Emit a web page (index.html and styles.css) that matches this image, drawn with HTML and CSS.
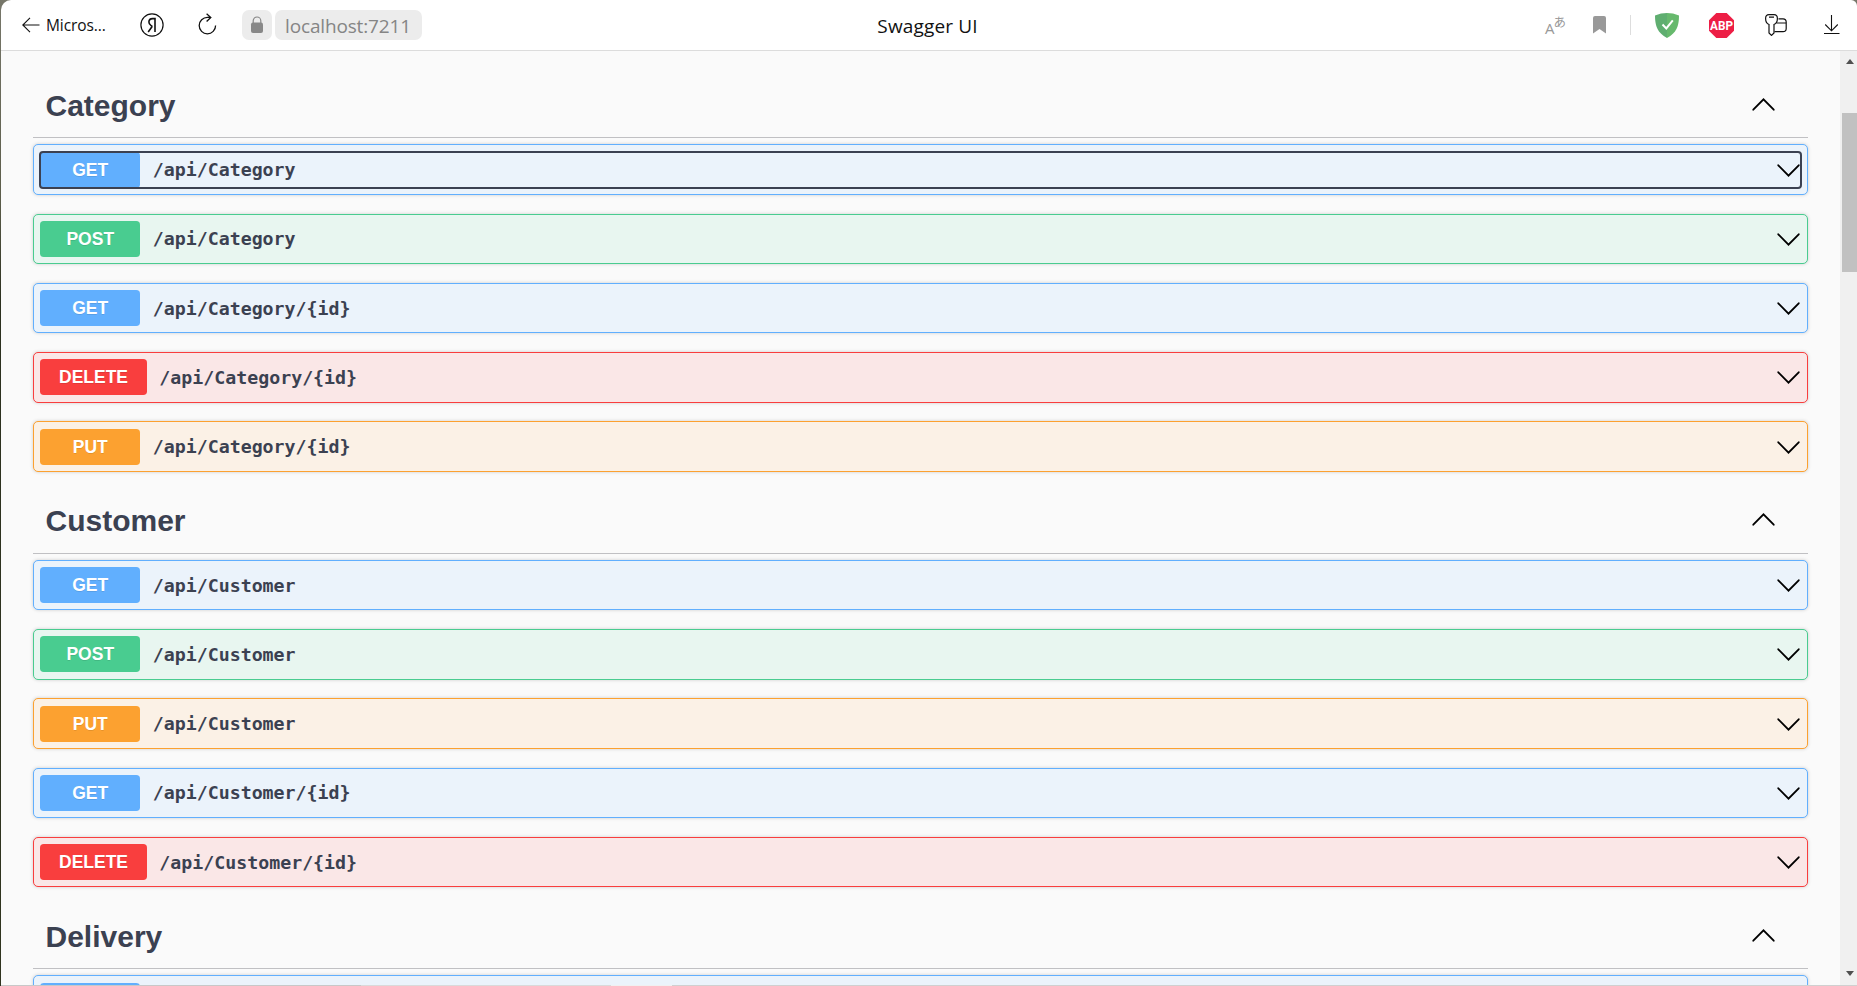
FILE: index.html
```html
<!DOCTYPE html>
<html lang="en">
<head>
<meta charset="utf-8">
<title>Swagger UI</title>
<link rel="stylesheet" href="styles.css">
</head>
<body>
<svg class="defs" aria-hidden="true">
  <symbol id="chev-down" viewBox="0 0 24 24"><path d="M2.200 7 12 17 21.800 7" fill="none" stroke="#000" stroke-width="1.8" stroke-linecap="round"/></symbol>
  <symbol id="chev-up" viewBox="0 0 24 24"><path d="M2.200 17 12 7 21.800 17" fill="none" stroke="#000" stroke-width="1.8" stroke-linecap="round"/></symbol>
</svg>
<div class="window">
  <header class="toolbar">
    <div class="nav">
      <svg class="back" width="18" height="16" viewBox="0 0 18 16"><path d="M8 .8.8 8 8 15.2M.8 8H17.5" fill="none" stroke="#111" stroke-width="1.1"/></svg>
      <span class="back-label">Micros...</span>
      <svg class="yandex" width="24" height="24" viewBox="0 0 24 24"><circle cx="12" cy="12" r="11.1" fill="none" stroke="#111" stroke-width="1.2"/><path d="M15 19V5.6h-2.3c-2.5 0-3.800 1.400-3.800 3.500 0 1.700.8 2.700 2.200 3.500l1.200.8M12.300 13.200 8.200 19" fill="none" stroke="#111" stroke-width="1.6"/></svg>
      <svg class="reload" width="20" height="22" viewBox="0 0 20 22"><path d="M13.6 4.400H10.500a8.200 8.200 0 1 0 8.100 8.200M9.600.8l4.200 3.700-4.200 4" fill="none" stroke="#111" stroke-width="1.3"/></svg>
      <span class="lock"><svg width="14" height="18" viewBox="0 0 14 18"><path d="M3.200 8V4.800a3.800 3.800 0 0 1 7.600 0V8" fill="none" stroke="#888" stroke-width="1.2"/><rect x="1" y="6.500" width="12" height="10.500" rx="2" fill="#888"/></svg></span>
      <span class="host">localhost:7211</span>
    </div>
    <div class="page-title">Swagger UI</div>
    <div class="tools">
      <div class="translate"><span class="latin">A</span><span class="kana">あ</span></div>
      <svg class="bookmark" width="13" height="18" viewBox="0 0 13 18"><path d="M0 2a2 2 0 0 1 2-2h9a2 2 0 0 1 2 2v15.500L6.500 13 0 17.500z" fill="#999"/></svg>
      <span class="divider"></span>
      <svg class="shield" width="24" height="25" viewBox="0 0 24 25"><path d="M12 0c4 0 8 .8 12 2.500C24 13 21.500 20 12 25z" fill="#67b96d"/><path d="M12 0C8 0 4 .8 0 2.500 0 13 2.500 20 12 25z" fill="#5fae70"/><path d="m7.500 11.500 3.800 3.900 6.500-8" fill="none" stroke="#fff" stroke-width="2"/></svg>
      <svg class="abp" width="25" height="25" viewBox="0 0 25 25"><path d="M7.300 0h10.400L25 7.300v10.400L17.700 25H7.300L0 17.700V7.300z" fill="#ed1e45"/><text x="12.500" y="16.900" text-anchor="middle" textLength="23" lengthAdjust="spacingAndGlyphs" class="abp-text">ABP</text></svg>
      <svg class="keys" width="22" height="22" viewBox="0 0 22 22" fill="none" stroke="#111" stroke-width="1.200"><path d="M4 10.500C1.500 9.500.6 7 .6 4.500.6 1.500 1.500.6 4 .6h5c2.500 0 3.400.9 3.400 3.900 0 2.500-.9 5-3.400 6v8.500L6.500 21.400 4 19zM4 3.200h5"/><path d="M13.500 4.800H18c2.200 0 3.200 1 3.200 3.200v6.500c0 2.200-1 3.200-3.200 3.200H9.500M11.500 9h9.700"/></svg>
      <svg class="download" width="16" height="20" viewBox="0 0 16 20"><path d="M7.500 0v15.500M1.200 9.500l6.300 6.300 6.300-6.300M0 18.500h15.500" fill="none" stroke="#111" stroke-width="1.100"/></svg>
    </div>
  </header>
  <div class="viewport">
    <main class="content">
      <section class="tag">
        <h3 class="tag-head"><span>Category</span><svg class="chev"><use href="#chev-up"/></svg></h3>
        <div class="op get"><div class="summary focused"><span class="method">GET</span><span class="path">/api/Category</span><svg class="chev"><use href="#chev-down"/></svg></div></div>
        <div class="op post"><div class="summary"><span class="method">POST</span><span class="path">/api/Category</span><svg class="chev"><use href="#chev-down"/></svg></div></div>
        <div class="op get"><div class="summary"><span class="method">GET</span><span class="path">/api/Category/{id}</span><svg class="chev"><use href="#chev-down"/></svg></div></div>
        <div class="op delete"><div class="summary"><span class="method">DELETE</span><span class="path">/api/Category/{id}</span><svg class="chev"><use href="#chev-down"/></svg></div></div>
        <div class="op put"><div class="summary"><span class="method">PUT</span><span class="path">/api/Category/{id}</span><svg class="chev"><use href="#chev-down"/></svg></div></div>
      </section>
      <section class="tag">
        <h3 class="tag-head"><span>Customer</span><svg class="chev"><use href="#chev-up"/></svg></h3>
        <div class="op get"><div class="summary"><span class="method">GET</span><span class="path">/api/Customer</span><svg class="chev"><use href="#chev-down"/></svg></div></div>
        <div class="op post"><div class="summary"><span class="method">POST</span><span class="path">/api/Customer</span><svg class="chev"><use href="#chev-down"/></svg></div></div>
        <div class="op put"><div class="summary"><span class="method">PUT</span><span class="path">/api/Customer</span><svg class="chev"><use href="#chev-down"/></svg></div></div>
        <div class="op get"><div class="summary"><span class="method">GET</span><span class="path">/api/Customer/{id}</span><svg class="chev"><use href="#chev-down"/></svg></div></div>
        <div class="op delete"><div class="summary"><span class="method">DELETE</span><span class="path">/api/Customer/{id}</span><svg class="chev"><use href="#chev-down"/></svg></div></div>
      </section>
      <section class="tag">
        <h3 class="tag-head"><span>Delivery</span><svg class="chev"><use href="#chev-up"/></svg></h3>
        <div class="op get"><div class="summary"><span class="method"></span></div></div>
      </section>
    </main>
    <div class="scrollbar">
      <svg width="8" height="5" viewBox="0 0 8 5"><path d="M4 0 8 5H0z" fill="#505050"/></svg>
      <div class="thumb"></div>
      <svg class="arrow-down" width="8" height="5" viewBox="0 0 8 5"><path d="M0 0h8L4 5z" fill="#505050"/></svg>
    </div>
  </div>
  <div class="bottom-edge"></div>
</div>
</body>
</html>
```
FILE: styles.css
```css
* { box-sizing: border-box; }
body { margin: 0; height: 986px; overflow: hidden; background: linear-gradient(#77776a, #5b5c49 200px, #2c301f 300px, #30341f); }
.defs { display: block; width: 0; height: 0; }
.window { display: flex; flex-direction: column; height: 986px; margin-left: 1px; background: #fff; border-radius: 10px 6px 0 0; overflow: hidden; }

.toolbar { flex: none; display: grid; grid-template-columns: 1fr auto 1fr; align-items: center; height: 51px; border-bottom: 1px solid #dcdcdc; font-family: "Open Sans", "Noto Sans", sans-serif; color: #111; }
.nav { display: flex; align-items: center; padding-left: 21px; }
.back-label { width: 62px; margin-left: 6px; font-size: 15.500px; letter-spacing: -0.100px; line-height: 24px; }
.yandex { margin-left: 32px; }
.reload { margin-left: 33px; margin-top: -2px; }
.lock { display: flex; align-items: center; justify-content: center; width: 30px; height: 30px; margin-left: 25px; border-radius: 7px; background: #ececec; }
.host { width: 147px; height: 30px; margin-left: 3px; padding-left: 10px; border-radius: 7px; background: #ececec; color: #858585; font-size: 19px; letter-spacing: -0.150px; line-height: 32px; }
.page-title { margin-right: 3px; font-size: 19px; letter-spacing: 0.150px; line-height: 26px; padding-top: 2px; }
.tools { display: flex; align-items: center; justify-content: flex-end; padding-right: 17px; }
.translate { display: flex; align-items: center; height: 28px; color: #999; }
.latin { margin-top: 6px; font: 15px/22px "Open Sans", sans-serif; }
.kana { margin: -6px 0 0 -1px; font: 12.500px/20px "Noto Sans CJK JP", sans-serif; }
.bookmark { margin-left: 27px; }
.divider { width: 1px; height: 20px; margin-left: 24px; background: #ddd; }
.shield { margin-left: 24px; }
.abp { margin-left: 30px; }
.abp-text { font: bold 12px Roboto, sans-serif; fill: #fff; }
.keys { margin-left: 31px; }
.download { margin-left: 37px; }

.viewport { flex: 1; display: flex; min-height: 0; overflow: hidden; background: #fafafa; }
.content { flex: 1; padding: 24.050px 32px 0; }
.tag-head { display: flex; align-items: center; justify-content: space-between; height: 63px; margin: 0 0 6.250px; padding: 0 32px 0.500px 12.500px; border-bottom: 1px solid #c0c0c3; color: #3b4151; font: bold 30px/40px "Liberation Sans", Arial, sans-serif; }
.chev { width: 25px; height: 25px; flex: none; }
.tag-head .chev { margin-bottom: 3px; }
.op { height: 50.500px; margin-bottom: 18.750px; padding: 6.250px; border: 1px solid var(--c); border-radius: 5px; background: var(--bg); box-shadow: 0 0 3.750px rgba(0, 0, 0, .19); }
.summary { display: flex; align-items: center; height: 36px; }
.summary .chev { margin-top: 1px; }
.focused { border-radius: 3px; outline: 2px solid #3b4151; outline-offset: -1px; }
.method { min-width: 100px; height: 36px; padding: 0 18.750px; border-radius: 3.750px; background: var(--c); color: #fff; font: bold 17.500px/36px "Liberation Sans", Arial, sans-serif; text-align: center; text-shadow: 0 1px 0 rgba(0, 0, 0, .1); }
.path { flex: 1; padding: 0 12.500px; color: #3b4151; font: bold 18.250px/37px "DejaVu Sans Mono", monospace; }
.get { --c: #61affe; --bg: #ebf3fb; }
.post { --c: #49cc90; --bg: #e8f6f0; }
.put { --c: #fca130; --bg: #fbf1e6; }
.delete { --c: #f93e3e; --bg: #fae7e7; }

.scrollbar { flex: none; display: flex; flex-direction: column; align-items: center; width: 17px; padding: 8px 0 9px 2px; background: #f0f0f0; }
.thumb { width: 15px; height: 159px; margin-top: 49px; background: #c1c1c1; }
.arrow-down { margin-top: auto; }
.bottom-edge { flex: none; height: 1px; background: linear-gradient(90deg, #c8c8c8 360px, #dadada 360px, #dadada 610px, #f0f0f0 610px, #f0f0f0 671px, #d0d0d0 671px); }
```
